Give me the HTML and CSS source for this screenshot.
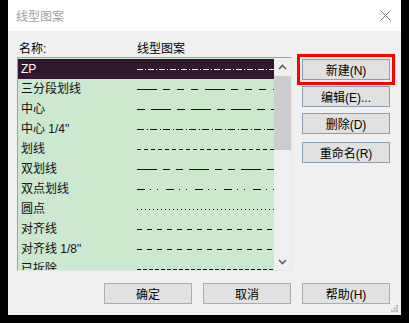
FILE: index.html
```html
<!DOCTYPE html>
<html lang="zh-CN">

<head>
    <meta charset="UTF-8">
    <title>线型图案</title>
    <link rel="stylesheet" href="styles.css">
</head>

<body>
    <div class="dialog">
        <div class="titlebar">
            <span class="title">线型图案</span>
            <svg class="close" width="11" height="11" viewBox="0 0 11 11">
                <path d="M0.5 0.5 L10.5 10.5 M10.5 0.5 L0.5 10.5" stroke="#7a7a7a" stroke-width="1" fill="none" />
            </svg>
        </div>

        <div class="content">
            <div class="left">
                <div class="list-header">
                    <span class="col-name">名称:</span>
                    <span class="col-pattern">线型图案</span>
                </div>
                <div class="listbox">
                    <div class="rows">
                        <div class="row selected">
                            <span class="name">ZP</span>
                            <svg class="pat" width="137" height="20"><line x1="0" y1="10.5" x2="137" y2="10.5" stroke="#fff" stroke-dasharray="6 2 1 2" /></svg>
                        </div>
                        <div class="row">
                            <span class="name">三分段划线</span>
                            <svg class="pat" width="137" height="20"><line x1="0" y1="10.5" x2="137" y2="10.5" stroke="#111" stroke-dasharray="20 6 7 7 7 7 7 7" /></svg>
                        </div>
                        <div class="row">
                            <span class="name">中心</span>
                            <svg class="pat" width="137" height="20"><line x1="0" y1="10.5" x2="137" y2="10.5" stroke="#111" stroke-dasharray="8 6 20 6" /></svg>
                        </div>
                        <div class="row">
                            <span class="name">中心 1/4"</span>
                            <svg class="pat" width="137" height="20"><line x1="0" y1="10.5" x2="137" y2="10.5" stroke="#111" stroke-dasharray="7 3 1 2" /></svg>
                        </div>
                        <div class="row">
                            <span class="name">划线</span>
                            <svg class="pat" width="137" height="20"><line x1="0" y1="10.5" x2="137" y2="10.5" stroke="#111" stroke-dasharray="4 3" /></svg>
                        </div>
                        <div class="row">
                            <span class="name">双划线</span>
                            <svg class="pat" width="137" height="20"><line x1="0" y1="10.5" x2="137" y2="10.5" stroke="#111" stroke-dasharray="20 6 7 6 7 6" /></svg>
                        </div>
                        <div class="row">
                            <span class="name">双点划线</span>
                            <svg class="pat" width="137" height="20"><line x1="0" y1="10.5" x2="137" y2="10.5" stroke="#111" stroke-dasharray="8 5 1 6 1 8" /></svg>
                        </div>
                        <div class="row">
                            <span class="name">圆点</span>
                            <svg class="pat" width="137" height="20"><line x1="0" y1="10.5" x2="137" y2="10.5" stroke="#111" stroke-dasharray="1 3" /></svg>
                        </div>
                        <div class="row">
                            <span class="name">对齐线</span>
                            <svg class="pat" width="137" height="20"><line x1="0" y1="10.5" x2="137" y2="10.5" stroke="#111" stroke-dasharray="5 5" /></svg>
                        </div>
                        <div class="row">
                            <span class="name">对齐线 1/8"</span>
                            <svg class="pat" width="137" height="20"><line x1="0" y1="10.5" x2="137" y2="10.5" stroke="#111" stroke-dasharray="5 5" /></svg>
                        </div>
                        <div class="row">
                            <span class="name">已拆除</span>
                            <svg class="pat" width="137" height="20"><line x1="0" y1="10.5" x2="137" y2="10.5" stroke="#111" stroke-dasharray="4 2" /></svg>
                        </div>
                    </div>
                    <div class="scrollbar">
                        <div class="arrow">
                            <svg width="9" height="6" viewBox="0 0 9 6"><path d="M1 5 L4.5 1.5 L8 5" stroke="#606060" stroke-width="1.6" fill="none" /></svg>
                        </div>
                        <div class="thumb"></div>
                        <div class="track"></div>
                        <div class="arrow">
                            <svg width="9" height="6" viewBox="0 0 9 6"><path d="M1 1 L4.5 4.5 L8 1" stroke="#606060" stroke-width="1.6" fill="none" /></svg>
                        </div>
                    </div>
                </div>
            </div>

            <div class="side">
                <button class="btn side-btn highlighted">新建(N)</button>
                <button class="btn side-btn">编辑(E)...</button>
                <button class="btn side-btn">删除(D)</button>
                <button class="btn side-btn rename">重命名(R)</button>
            </div>
        </div>

        <div class="footer">
            <button class="btn">确定</button>
            <button class="btn">取消</button>
            <button class="btn">帮助(H)</button>
        </div>

        <svg class="grip" width="7" height="7" viewBox="0 0 7 7">
            <rect x="5" y="0" width="2" height="2" fill="#b8b8b8" />
            <rect x="2.5" y="2.5" width="2" height="2" fill="#b8b8b8" />
            <rect x="5" y="2.5" width="2" height="2" fill="#b8b8b8" />
            <rect x="0" y="5" width="2" height="2" fill="#b8b8b8" />
            <rect x="2.5" y="5" width="2" height="2" fill="#b8b8b8" />
            <rect x="5" y="5" width="2" height="2" fill="#b8b8b8" />
        </svg>
    </div>
</body>

</html>
```

FILE: styles.css
```css
* {
    margin: 0;
    padding: 0;
    box-sizing: border-box;
    font-family: 'Liberation Sans', 'Noto Sans CJK SC', sans-serif;
}

body {
    background: #000;
    width: 409px;
    height: 323px;
    overflow: hidden;
}

.dialog {
    position: relative;
    width: 393px;
    height: 315px;
    margin-left: 8px;
    background: #f0f0f0;
    display: flex;
    flex-direction: column;
}

.titlebar {
    height: 31px;
    background: #fff;
    display: flex;
    align-items: center;
    justify-content: space-between;
    padding: 0 10px 0 8px;
}

.title {
    font-size: 12px;
    color: #a2a2a2;
}

.close {
    display: block;
}

.content {
    display: flex;
    padding: 10px 11px 0 9px;
}

.left {
    width: 275px;
}

.list-header {
    height: 16px;
    display: flex;
    font-size: 12px;
    line-height: 16px;
    color: #000;
}

.col-name {
    width: 120px;
    padding-left: 2px;
}

.listbox {
    height: 214px;
    display: flex;
    border-top: 1px solid #a0a0a0;
    border-left: 1px solid #a0a0a0;
    border-right: 1px solid #e6e6e6;
    border-bottom: 1px solid #e6e6e6;
    background: #fff;
}

.rows {
    width: 256px;
    padding-top: 1px;
    overflow: hidden;
    background: #cce8cf;
}

.row {
    height: 20px;
    display: flex;
    align-items: center;
    font-size: 12px;
    line-height: 20px;
    color: #111;
    background: #cce8cf;
}

.row.selected {
    background: #33172f;
    color: #fff;
}

.name {
    width: 119px;
    padding-left: 3px;
    white-space: nowrap;
}

.pat {
    display: block;
    flex-shrink: 0;
}

.scrollbar {
    width: 17px;
    display: flex;
    flex-direction: column;
    background: #f0f0f0;
}

.arrow {
    height: 17px;
    display: flex;
    align-items: center;
    justify-content: center;
}

.thumb {
    height: 74px;
    margin-top: 1px;
    background: #cdcdcd;
}

.track {
    flex: 1;
}

.side {
    display: flex;
    flex-direction: column;
    margin-left: 10px;
    padding-top: 18px;
}

.btn {
    width: 88px;
    height: 21px;
    font-family: 'Liberation Sans', 'Noto Sans CJK SC', sans-serif;
    font-size: 12px;
    color: #000;
    background: #e1e1e1;
    border: 1px solid #adadad;
    cursor: pointer;
}

.side-btn {
    border-color: #8c9db0;
    margin-bottom: 6px;
}

.side-btn.rename {
    margin-top: 2px;
}

.highlighted {
    outline: 3px solid #ff0000;
    outline-offset: 2px;
}

.footer {
    display: flex;
    justify-content: flex-end;
    gap: 11px;
    padding: 12px 11px 0 0;
}

.grip {
    position: absolute;
    right: 3px;
    bottom: 3px;
}
```
